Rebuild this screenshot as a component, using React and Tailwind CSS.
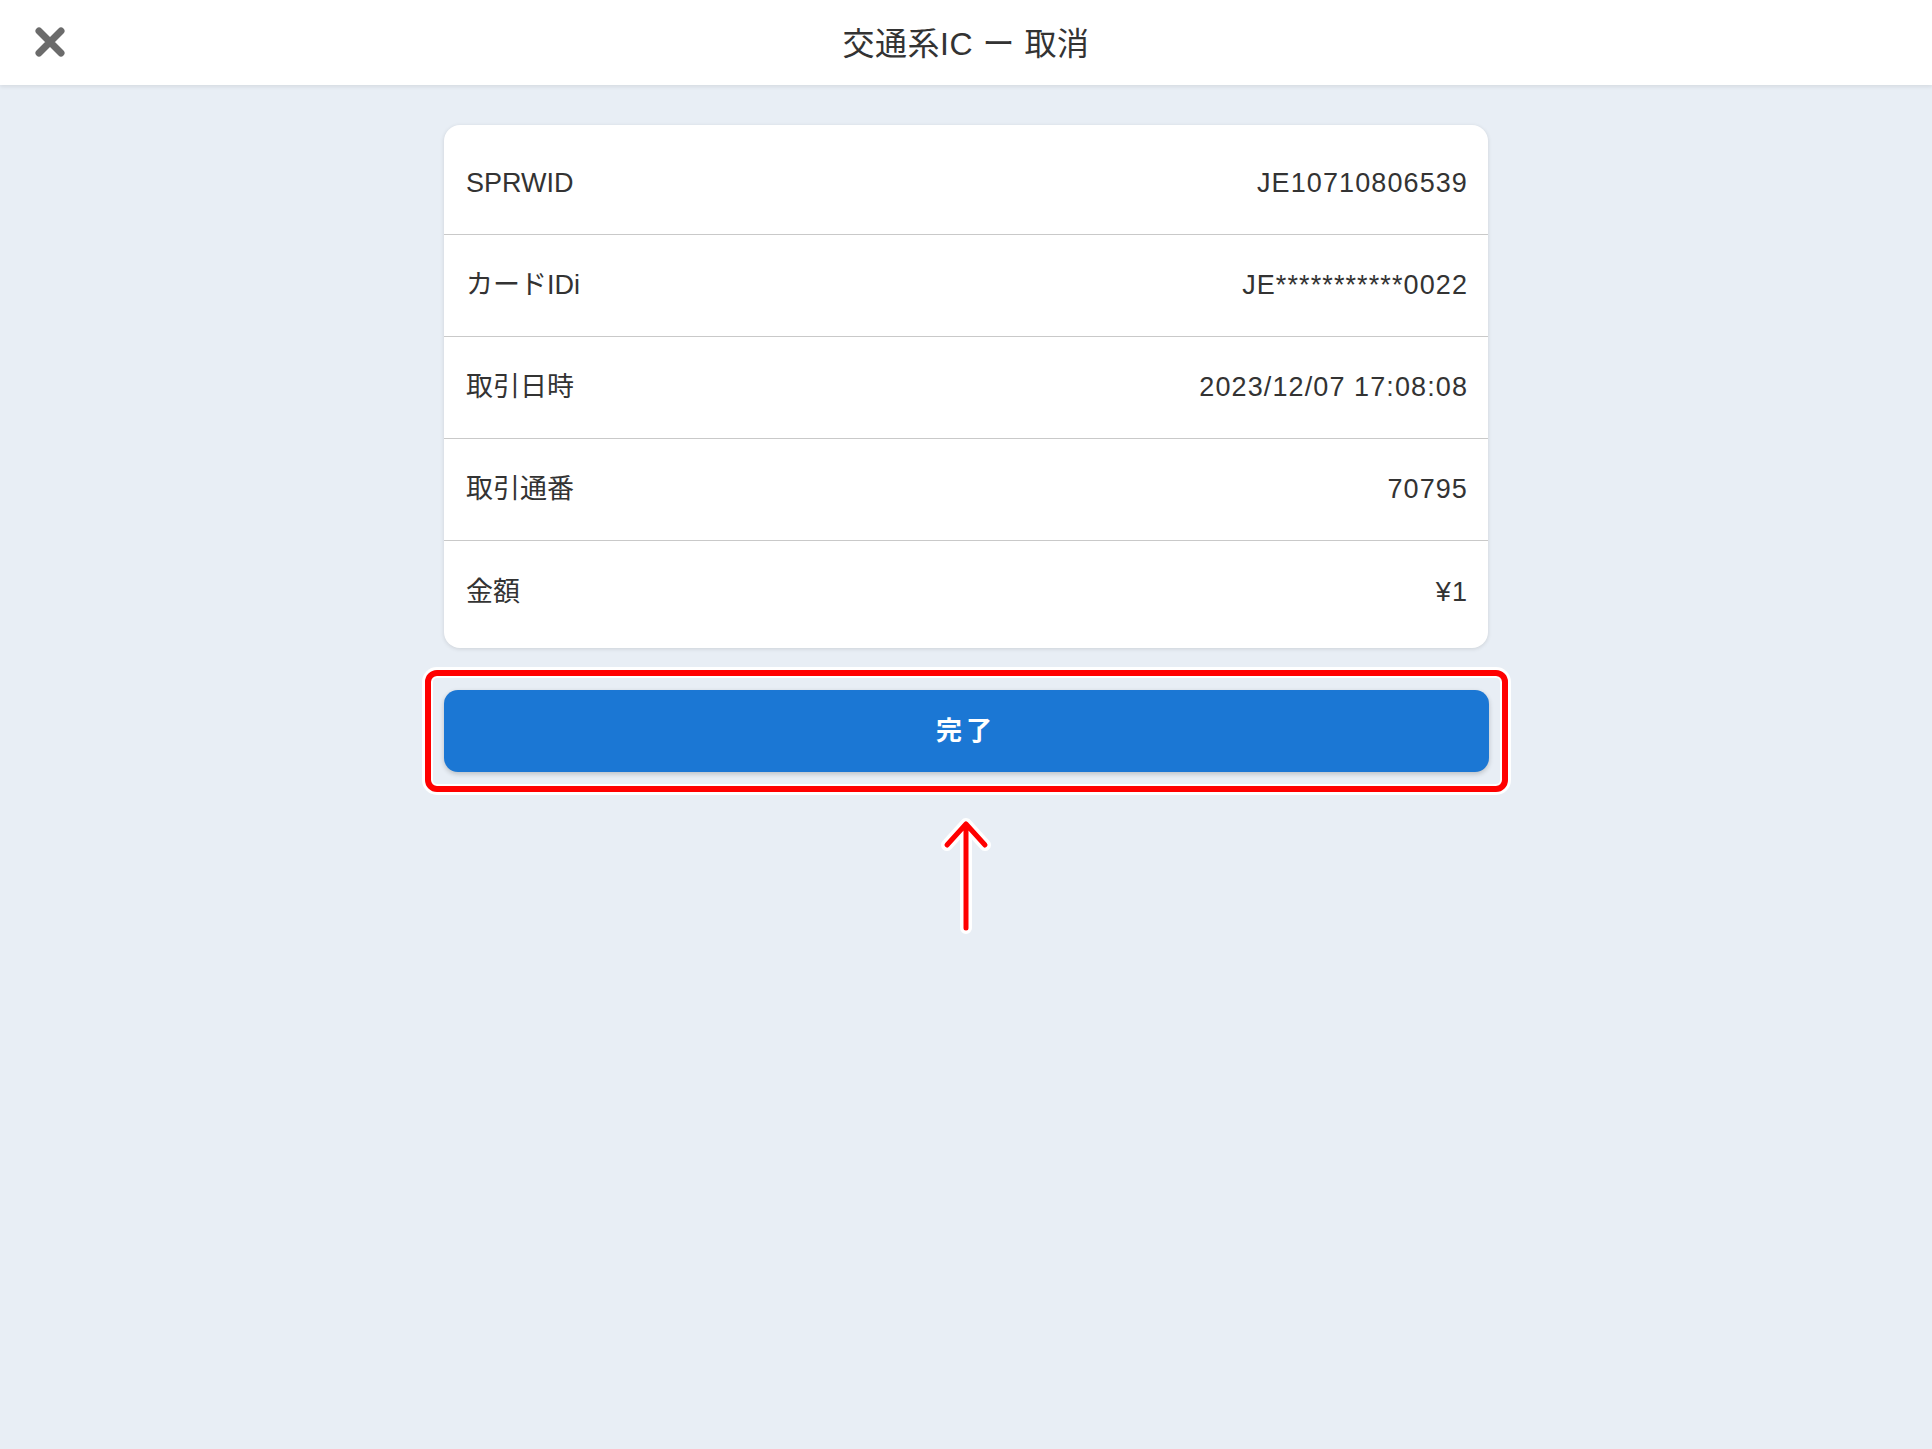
import React from 'react'

const rows = [
  { label: 'SPRWID', value: 'JE10710806539' },
  { label: 'カードIDi', value: 'JE***********0022' },
  { label: '取引日時', value: '2023/12/07 17:08:08' },
  { label: '取引通番', value: '70795' },
  { label: '金額', value: '¥1' },
]

const font = { fontFamily: '"Liberation Sans", "Noto Sans CJK JP", sans-serif' }

const App = () => {
  return (
    <div style={font} className='w-[1932px] h-[1449px] bg-[#e8eef5] flex flex-col text-[#333]'>
      <div className='h-[85px] bg-white flex items-center relative shadow-[0_2px_4px_rgba(0,0,0,0.08)] z-10'>
        <button className='absolute left-[35px] top-[27px] w-[30px] h-[30px]'>
          <svg viewBox='0 0 30 30' width='30' height='30'>
            <path d='M4 4 L26 26 M26 4 L4 26' stroke='#6b6b6b' strokeWidth='7' strokeLinecap='round' />
          </svg>
        </button>
        <div className='flex-1 text-center text-[32px] leading-none pt-[2px] tracking-[0.5px]'>
          交通系IC ー 取消
        </div>
      </div>

      <div className='flex flex-col items-center pt-[40px]'>
        <div className='w-[1044px] bg-white rounded-[16px] shadow-[0_1px_4px_rgba(0,0,0,0.12)] pt-[8px] pb-[5px]'>
          {rows.map((r, i) => (
            <div
              key={r.label}
              className={'flex items-center justify-between pl-[22px] pr-[20px] h-[102px] text-[27px] ' + (i < rows.length - 1 ? 'border-b border-[#c9c9c9]' : '')}
            >
              <span>{r.label}</span>
              <span className='tracking-[1.1px]'>{r.value}</span>
            </div>
          ))}
        </div>

        <div className='mt-[22px] w-[1083px] rounded-[12px] border-[6px] border-[#ff0000] shadow-[0_0_0_3px_#ffffff,inset_0_0_0_2px_#ffffff] px-[13px] py-[14px]'>
          <button className='w-full h-[82px] rounded-[14px] bg-[#1b77d4] text-white text-[26px] font-bold tracking-[4px] shadow-[0_2px_5px_rgba(0,0,0,0.2)]'>
            完了
          </button>
        </div>

        <svg className='mt-[26px]' width='60' height='116' viewBox='0 0 60 116'>
          <g fill='none' strokeLinecap='round' strokeLinejoin='round'>
            <path d='M30 110 L30 6 M11 27 L30 6 L49 27' stroke='#ffffff' strokeWidth='12' />
            <path d='M30 110 L30 6 M11 27 L30 6 L49 27' stroke='#ff0000' strokeWidth='5' />
          </g>
        </svg>
      </div>
    </div>
  )
}

export default App
